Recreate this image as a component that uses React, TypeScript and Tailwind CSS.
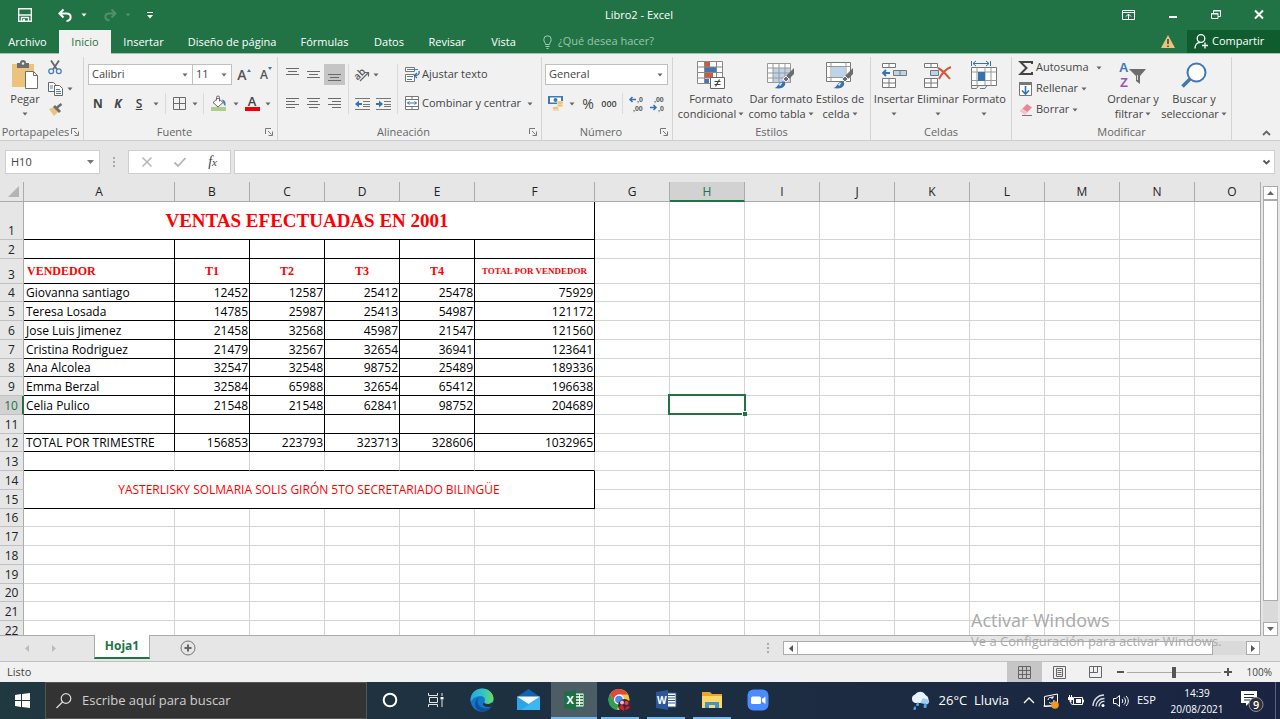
import type { ReactNode } from "react";
import clsx from "clsx";

const COLUMNS = ["A", "B", "C", "D", "E", "F", "G", "H", "I", "J", "K", "L", "M", "N", "O"];

const SALES: Record<number, string[]> = {
    4: ["Giovanna santiago", "12452", "12587", "25412", "25478", "75929"],
    5: ["Teresa Losada", "14785", "25987", "25413", "54987", "121172"],
    6: ["Jose Luis Jimenez", "21458", "32568", "45987", "21547", "121560"],
    7: ["Cristina Rodriguez", "21479", "32567", "32654", "36941", "123641"],
    8: ["Ana Alcolea", "32547", "32548", "98752", "25489", "189336"],
    9: ["Emma Berzal", "32584", "65988", "32654", "65412", "196638"],
    10: ["Celia Pulico", "21548", "21548", "62841", "98752", "204689"],
    11: ["", "", "", "", "", ""],
    12: ["TOTAL POR TRIMESTRE", "156853", "223793", "323713", "328606", "1032965"],
};

const TABS = [
    { name: "Archivo", width: "w-[59px] pr-1" },
    { name: "Inicio", width: "w-[52px]", active: true },
    { name: "Insertar", width: "w-[65px]" },
    { name: "Diseño de página", width: "w-[112px]" },
    { name: "Fórmulas", width: "w-[73px]" },
    { name: "Datos", width: "w-[56px]" },
    { name: "Revisar", width: "w-[60px]" },
    { name: "Vista", width: "w-[53px]" },
];

function Svg({ w, h, children }: { w: number; h: number; children: ReactNode }) {
    return (
        <svg width={w} height={h} viewBox={`0 0 ${w} ${h}`} fill="none" className="shrink-0 overflow-visible" aria-hidden="true">
            {children}
        </svg>
    );
}

function Caret({ color = "#666" }: { color?: string }) {
    return (
        <Svg w={6} h={4}>
            <path d="M0.500 0.500h5L3 3.500z" fill={color} />
        </Svg>
    );
}

function ToolButton({ label, className, children }: { label: string; className: string; children: ReactNode }) {
    return (
        <button aria-label={label} className={clsx("flex h-[21px] shrink-0 items-center justify-center", className)}>
            {children}
        </button>
    );
}

function Separator() {
    return <div className="mx-[3px] w-px self-stretch bg-[#dadada]" />;
}

function Combo({ label, value, className }: { label: string; value: string; className: string }) {
    return (
        <div className={clsx("flex h-[21px] items-center border border-[#c0c0c0] bg-white pr-1", className)}>
            <select aria-label={label} className="min-w-0 flex-1 appearance-none bg-transparent pl-[3px] outline-none">
                <option>{value}</option>
            </select>
            <Caret />
        </div>
    );
}

function Group({ title, className, launcher, children }: { title: string; className: string; launcher?: boolean; children: ReactNode }) {
    return (
        <section className={clsx("flex shrink-0 flex-col border-r border-[#d4d4d4]", className)}>
            <div className="flex flex-1 items-start">{children}</div>
            <div className="flex h-4 items-center text-[#666]">
                <span className="flex-1 text-center">{title}</span>
                {launcher && (
                    <button aria-label={`Opciones de ${title}`} className="mr-1">
                        <Svg w={8} h={8}>
                            <path d="M0.500 6V0.500H6M3 3l3.500 3.500M7.500 3.500v4h-4" stroke="#777" />
                        </Svg>
                    </button>
                )}
            </div>
        </section>
    );
}

function BigButton({ icon, line1, line2, className }: { icon: ReactNode; line1: string; line2?: string; className: string }) {
    return (
        <button className={clsx("flex shrink-0 flex-col items-center pt-[3px] leading-[15px] whitespace-nowrap", className)}>
            <span className="mb-px flex h-[30px] items-center">{icon}</span>
            <span>{line1}</span>
            <span className="flex h-[15px] items-center gap-[2px]">
                {line2}
                <Caret />
            </span>
        </button>
    );
}

function Lines({ rows, top = 0 }: { rows: [number, number][]; top?: number }) {
    return (
        <Svg w={14} h={13}>
            {rows.map(([x1, x2], i) => (
                <path key={i} d={`M${x1} ${top + i * 3 + 0.5}H${x2}`} stroke="#6a6a6a" />
            ))}
        </Svg>
    );
}

/* ---------- ribbon drawings ---------- */

const PasteIcon = (
    <Svg w={28} h={30}>
        <path d="M1 4h22v23H1z" fill="#ecc37c" />
        <path d="M6 3h3a3 3 0 0 1 6 0h3v5H6z" fill="#6d6d6d" />
        <circle cx="12" cy="3.500" r="1.200" fill="#f1f1f1" />
        <path d="M14.500 11.500h8l4 4v13h-12z" fill="#fff" stroke="#6d6d6d" />
        <path d="M22.500 11.500v4h4" stroke="#6d6d6d" />
    </Svg>
);

const CutIcon = (
    <Svg w={14} h={15}>
        <path d="M3 0.500l6 9M11 0.500l-6 9" stroke="#666" strokeWidth="1.800" />
        <circle cx="3.200" cy="11.300" r="2.400" stroke="#4a7ebb" strokeWidth="1.300" />
        <circle cx="10.800" cy="11.300" r="2.400" stroke="#4a7ebb" strokeWidth="1.300" />
    </Svg>
);

const CopyIcon = (
    <Svg w={15} h={14}>
        <path d="M0.500 0.500h5l2 2v7h-7z" fill="#fff" stroke="#666" />
        <path d="M2 4h3M2 6h3" stroke="#4a7ebb" />
        <path d="M6.500 3.500h5l3 3v7h-8z" fill="#fff" stroke="#666" />
        <path d="M8 7.500h4M8 9.500h5M8 11.500h5" stroke="#4a7ebb" />
    </Svg>
);

const PainterIcon = (
    <Svg w={15} h={13}>
        <path d="M1 6l5-2 4 5-4 4z" fill="#ecc37c" />
        <path d="M5 4l2-2 6 6-2 2z" fill="#6d6d6d" />
        <path d="M9 4.500L13.500 1" stroke="#6d6d6d" strokeWidth="2.500" />
    </Svg>
);

const BordersIcon = (
    <Svg w={13} h={13}>
        <path d="M0.500 0.500h12v12h-12zM6.500 0.500v12M0.500 6.500h12" stroke="#6a6a6a" />
    </Svg>
);

const FillIcon = (
    <Svg w={16} h={15}>
        <path d="M0 11h15v4H0z" fill="#a9d08e" />
        <path d="M2 6.500l5-4.500 5 4.500-5 4.500z" fill="#fff" stroke="#6a6a6a" />
        <path d="M5.500 4.500V1.500a1.500 1.500 0 0 1 3 0v4" stroke="#6a6a6a" />
        <path d="M11 3.500c3 0.500 4 2.500 3.500 6.500-1.500-0.500-2-2.500-2.500-4z" fill="#4a7ebb" />
    </Svg>
);

const OrientationIcon = (
    <Svg w={16} h={15}>
        <text x="0" y="11" transform="rotate(-45 5 8)" fontSize="10" fontFamily="Open Sans" fontWeight="600" fill="#555">ab</text>
        <path d="M6 14L14 6M14.500 9.500V5.500h-4" stroke="#666" strokeWidth="1.200" />
    </Svg>
);

function IndentIcon({ outdent }: { outdent?: boolean }) {
    return (
        <Svg w={15} h={12}>
            <path d="M0 0.500h15M8 3.500h7M8 6.500h7M8 8.500h7M0 11.500h15" stroke="#777" />
            {outdent ? (
                <path d="M0 6l4-3.500v2.500h3v2H4v2.500z" fill="#3572b0" />
            ) : (
                <path d="M7 6L3 2.500V5H0v2h3v2.500z" fill="#3572b0" />
            )}
        </Svg>
    );
}

const WrapIcon = (
    <Svg w={15} h={15}>
        <path d="M0.500 0.500h9v4h-9z" fill="#fff" stroke="#777" />
        <path d="M2 2.500h11" stroke="#4a7ebb" />
        <path d="M0.500 7.500h9v7h-9z" fill="#fff" stroke="#777" />
        <path d="M2 9.500h6M2 12.500h5" stroke="#4a7ebb" />
        <path d="M14 4c1 3-1 4.500-4 4.500M12 6l-2.500 2.500L12 11" stroke="#3572b0" strokeWidth="1.300" />
    </Svg>
);

const MergeIcon = (
    <Svg w={15} h={15}>
        <path d="M0.500 0.500h13v13h-13zM0.500 3.500h13M0.500 10.500h13M7 0.500v3M7 10.500v3" fill="#fff" stroke="#777" />
        <path d="M2.500 7h9M4.500 5.500L2.500 7l2 1.500M9.500 5.500l2 1.500-2 1.500" stroke="#3572b0" />
    </Svg>
);

const CurrencyIcon = (
    <Svg w={16} h={15}>
        <path d="M0 0h15v8H0z" fill="#3f78b5" />
        <path d="M2 1.500h11v5H2z" fill="#fff" />
        <circle cx="7.500" cy="4" r="2" fill="#3f78b5" />
        <path d="M9 5h6v7H9z" fill="#f1f1f1" />
        <ellipse cx="12" cy="6.500" rx="3" ry="1.500" fill="#ecc37c" />
        <ellipse cx="12" cy="9.500" rx="3" ry="1.300" fill="#ecc37c" />
        <ellipse cx="7.500" cy="12" rx="3" ry="1.300" fill="#ecc37c" />
        <path d="M5 13.500h6v1H5z" fill="#ecc37c" />
    </Svg>
);

function DecimalIcon({ more }: { more?: boolean }) {
    return (
        <Svg w={15} h={15}>
            <text x={more ? 8 : 4} y="6" fontSize="7" fontFamily="Liberation Sans" fontWeight="700" fill="#555">{more ? ",0" : ",00"}</text>
            <text x={more ? 4 : 8} y="15" fontSize="7" fontFamily="Liberation Sans" fontWeight="700" fill="#555">{more ? ",00" : ",0"}</text>
            {more ? (
                <path d="M7 3.500H1M3.500 1L1 3.500 3.500 6" stroke="#3572b0" strokeWidth="1.500" />
            ) : (
                <path d="M0 11.500h6M3.500 9L6 11.500 3.500 14" stroke="#3572b0" strokeWidth="1.500" />
            )}
        </Svg>
    );
}

const ConditionalIcon = (
    <Svg w={28} h={28}>
        <path d="M0.500 0.500h25v22h-25z" fill="#fff" />
        <path d="M8 0h5v6H8zM8 12h8v5H8z" fill="#d5573b" />
        <path d="M8 6h11v5H8zM8 18h4v4H8z" fill="#3f78b5" />
        <path d="M0.500 0.500h25v22h-25zM7.500 0.500v22M19.500 0.500v22M0.500 6h25M0.500 11.500h25M0.500 17h25" stroke="#888" />
        <path d="M13.500 16.500h14v11h-14z" fill="#fff" stroke="#666" />
        <path d="M17.500 20.500h6M17.500 23.500h6M22.500 18.500l-4 7" stroke="#444" strokeWidth="1.200" />
    </Svg>
);

const Brush = (
    <>
        <path d="M27 6v6l-7 7-3-3z" fill="#6d6d6d" />
        <path d="M19 14l3 3-3 3-3-3z" fill="#6d6d6d" stroke="#f1f1f1" />
        <path d="M7 26c4-0.500 4-5 8-6.500 2.500-0.500 4 1.500 3 3.500-1.500 3.500-6 4-11 3z" fill="#3572b0" />
        <path d="M12 22.500c1-1.500 2.500-2 3.500-1.500-1 0.500-1 2-2.500 3z" fill="#dbe8f4" />
    </>
);

const TableFormatIcon = (
    <Svg w={28} h={27}>
        <path d="M0.500 1.500h23v19h-23z" fill="#fff" />
        <path d="M6 6h18v15H6z" fill="#bdd3e9" />
        <path d="M0.500 1.500h23v19h-23zM6 1.500v19M12 1.500v19M18 1.500v19M0.500 6h23M0.500 11h23M0.500 16h23" stroke="#999" />
        {Brush}
    </Svg>
);

const CellStyleIcon = (
    <Svg w={28} h={27}>
        <path d="M0.500 0.500h24v19h-24z" fill="#fff" stroke="#777" />
        <path d="M5 0.500v19M20 0.500v19M0.500 4.500h24M0.500 15.500h24" stroke="#999" />
        <path d="M6 5h13v10H6z" fill="#bdd3e9" />
        {Brush}
    </Svg>
);

const InsertIcon = (
    <Svg w={26} h={27}>
        <path d="M1.500 1.500h13v4h-13zM8 1.500v4M1.500 16.500h13v9h-13zM8 16.500v9M1.500 21h13" fill="#fff" stroke="#777" />
        <path d="M12.500 8.500h13v5h-13z" fill="#bdd3e9" stroke="#777" />
        <path d="M19 8.500v5" stroke="#777" />
        <path d="M9 11H2M5 8l-3 3 3 3" stroke="#3572b0" strokeWidth="1.800" />
    </Svg>
);

const DeleteIcon = (
    <Svg w={28} h={27}>
        <path d="M0.500 1.500h13v4h-13zM7 1.500v4M0.500 16.500h13v9h-13zM7 16.500v9M0.500 21h13" fill="#fff" stroke="#777" />
        <path d="M6.500 8.500h8v5h-8z" fill="#bdd3e9" stroke="#777" />
        <path d="M14 6c4 2 8 6 12 11M27 5c-5 2-9 6-12 12" stroke="#d5573b" strokeWidth="2" />
    </Svg>
);

const FormatIcon = (
    <Svg w={28} h={29}>
        <path d="M1.500 0v5M20.500 0v5M3 2.500h16M6 0L3 2.500 6 5M16 0l3 2.500L16 5" stroke="#3572b0" />
        <path d="M1.500 6.500h25v18h-25z" fill="#fff" stroke="#777" />
        <path d="M7 6.500v18M15 6.500v18M21 6.500v18M1.500 11h25M1.500 19.500h25" stroke="#999" />
        <path d="M8 11h7v9H8z" fill="#3572b0" />
        <path d="M1.500 24.500v3h5l2-3M10 27.500h5l2-3" stroke="#777" />
    </Svg>
);

const SortIcon = (
    <Svg w={28} h={27}>
        <text x="0" y="10" fontSize="13" fontFamily="Liberation Sans" fontWeight="700" fill="#3f78b5">A</text>
        <text x="1" y="25" fontSize="13" fontFamily="Liberation Sans" fontWeight="700" fill="#9a52b8">Z</text>
        <path d="M10 7h17l-6 7v8l-4-3v-5z" fill="#6d6d6d" />
        <path d="M18.500 13v5" stroke="#ddd" />
    </Svg>
);

const FindIcon = (
    <Svg w={26} h={27}>
        <circle cx="15.500" cy="10.500" r="9" fill="#fff" stroke="#3f78b5" strokeWidth="2" />
        <path d="M9 17l-7.500 7.500" stroke="#3f78b5" strokeWidth="3.500" />
    </Svg>
);

/* ---------- window ---------- */

function TitleBar() {
    return (
        <header className="flex h-[30px] shrink-0 items-center bg-[#217346] text-white">
            <div className="flex flex-1 items-center pl-[18px]">
                <button aria-label="Guardar" className="mr-[26px]">
                    <Svg w={14} h={14}>
                        <path d="M0.700 0.700h12.600v12.600H0.700z" stroke="#f3f8f5" strokeWidth="1.400" />
                        <path d="M1 7h12M3.500 13V9.500h7V13" stroke="#f3f8f5" strokeWidth="1.400" />
                        <path d="M5 11h2v3H5z" fill="#f3f8f5" />
                    </Svg>
                </button>
                <button aria-label="Deshacer" className="mr-2">
                    <Svg w={15} h={13}>
                        <path d="M1.500 4.500h7c5.500 0 5.500 7 0 7.500M5.500 0.500l-4 4 4 4" stroke="#fff" strokeWidth="2" />
                    </Svg>
                </button>
                <Caret color="#fff" />
                <button aria-label="Rehacer" className="mr-2 ml-4">
                    <Svg w={14} h={13}>
                        <path d="M12.500 4.500h-6c-5.500 0-5.500 6 0 7M8.500 0.500l4 4-4 4" stroke="#4e916b" strokeWidth="2" />
                    </Svg>
                </button>
                <Caret color="#4e916b" />
                <button aria-label="Personalizar barra" className="ml-4">
                    <Svg w={6} h={7}>
                        <path d="M0 0.500h6" stroke="#fff" />
                        <path d="M0 3h6L3 6.500z" fill="#fff" />
                    </Svg>
                </button>
            </div>
            <h1 className="pr-1">Libro2 - Excel</h1>
            <div className="flex flex-1 items-center justify-end gap-[33px] pr-4">
                <button aria-label="Opciones de la cinta">
                    <Svg w={13} h={10}>
                        <path d="M0.500 0.500h12v9h-12zM0.500 2.500h12M6.500 9V4.500M4 6.500l2.500-2.500L9 6.500" stroke="#fff" />
                    </Svg>
                </button>
                <button aria-label="Minimizar">
                    <Svg w={10} h={10}>
                        <path d="M1 7h8" stroke="#fff" strokeWidth="2" />
                    </Svg>
                </button>
                <button aria-label="Restaurar">
                    <Svg w={10} h={10}>
                        <path d="M2.500 3V0.500h7v6H7M0.500 3.500h6.500v5H0.500zM0.500 4h6.500M2.500 1h7" stroke="#fff" />
                    </Svg>
                </button>
                <button aria-label="Cerrar">
                    <Svg w={10} h={10}>
                        <path d="M1 0.500l8 8M9 0.500l-8 8" stroke="#fff" strokeWidth="2" />
                    </Svg>
                </button>
            </div>
        </header>
    );
}

function TabBar() {
    return (
        <nav className="flex h-[24px] shrink-0 items-stretch border-b border-[#9fc3ad] bg-[#217346] text-white">
            {TABS.map((tab) => (
                <button
                    key={tab.name}
                    className={clsx("shrink-0 pt-px whitespace-nowrap", tab.width, tab.active && "-mb-px bg-[#f1f1f1] text-[#217346]")}
                >
                    {tab.name}
                </button>
            ))}
            <label className="flex min-w-0 flex-1 items-center gap-[6px] pl-[13px]">
                <Svg w={9} h={14}>
                    <path d="M2.500 9.500C2.500 7.500 0.800 7 0.800 4.500a3.700 3.700 0 0 1 7.400 0C8.200 7 6.500 7.500 6.500 9.500zM2.500 11.500h4M3.500 13.500h2" stroke="#a6cdb5" />
                </Svg>
                <input
                    placeholder="¿Qué desea hacer?"
                    aria-label="¿Qué desea hacer?"
                    className="min-w-0 flex-1 bg-transparent outline-none placeholder:text-[#9cc4ab]"
                />
            </label>
            <div className="flex w-[26px] shrink-0 items-center">
                <Svg w={14} h={13}>
                    <path d="M7 0l7 13H0z" fill="#ecc37c" />
                    <path d="M7 4v5M7 10.500v1.500" stroke="#444" strokeWidth="1.600" />
                </Svg>
            </div>
            <button className="flex w-[93px] shrink-0 items-center gap-[4px] bg-[#0f5c2f] pl-[7px]">
                <Svg w={14} h={15}>
                    <circle cx="7" cy="4.500" r="3.800" stroke="#fff" strokeWidth="1.300" />
                    <path d="M1 14.500c0-3.500 2-6 5-6M11 8.500v6M8 11.500h6" stroke="#fff" strokeWidth="1.300" />
                </Svg>
                Compartir
            </button>
        </nav>
    );
}

function Ribbon() {
    return (
        <div className="flex h-[87px] shrink-0 overflow-hidden border-b border-[#cfcfcf] bg-[#f1f1f1] pt-[3px]">
            <Group title="Portapapeles" className="w-[84px]" launcher>
                <BigButton icon={PasteIcon} line1="Pegar" className="w-[44px] pl-[6px]" />
                <div className="flex flex-col pl-[3px]">
                    <ToolButton label="Cortar" className="w-[16px]">{CutIcon}</ToolButton>
                    <div className="flex">
                        <ToolButton label="Copiar" className="w-[16px]">{CopyIcon}</ToolButton>
                        <ToolButton label="Más opciones de copiar" className="w-[14px]"><Caret /></ToolButton>
                    </div>
                    <ToolButton label="Copiar formato" className="w-[16px]">{PainterIcon}</ToolButton>
                </div>
            </Group>

            <Group title="Fuente" className="w-[194px]" launcher>
                <div className="flex flex-col gap-2 pt-[7px] pl-1">
                    <div className="flex">
                        <Combo label="Fuente" value="Calibri" className="w-[105px]" />
                        <Combo label="Tamaño" value="11" className="-ml-px w-[40px]" />
                        <ToolButton label="Aumentar tamaño" className="w-[24px] text-[14px] font-semibold text-[#555]">
                            A<span className="mb-2"><Svg w={4} h={3}><path d="M0 3h4L2 0z" fill="#3f78b5" /></Svg></span>
                        </ToolButton>
                        <ToolButton label="Disminuir tamaño" className="w-[20px] text-[12px] font-semibold text-[#555]">
                            A<span className="mb-3"><Svg w={4} h={3}><path d="M0 0h4L2 3z" fill="#3f78b5" /></Svg></span>
                        </ToolButton>
                    </div>
                    <div className="flex">
                        <ToolButton label="Negrita" className="w-[20px] text-[12px] font-bold">N</ToolButton>
                        <ToolButton label="Cursiva" className="w-[20px] text-[12px] font-bold italic">K</ToolButton>
                        <ToolButton label="Subrayado" className="w-[22px] text-[12px] font-semibold underline">S</ToolButton>
                        <ToolButton label="Tipos de subrayado" className="w-[12px]"><Caret /></ToolButton>
                        <Separator />
                        <ToolButton label="Bordes" className="w-[21px]">{BordersIcon}</ToolButton>
                        <ToolButton label="Tipos de borde" className="w-[10px]"><Caret /></ToolButton>
                        <Separator />
                        <ToolButton label="Color de relleno" className="w-[24px]">{FillIcon}</ToolButton>
                        <ToolButton label="Colores de relleno" className="w-[10px]"><Caret /></ToolButton>
                        <ToolButton label="Color de fuente" className="w-[22px]">
                            <span className="flex h-[15px] w-[15px] items-center justify-center border-b-4 border-[#f00000] text-[13px] font-semibold">A</span>
                        </ToolButton>
                        <ToolButton label="Colores de fuente" className="w-[10px]"><Caret /></ToolButton>
                    </div>
                </div>
            </Group>

            <Group title="Alineación" className="w-[264px]" launcher>
                <div className="flex pt-[7px] pl-1">
                    <div className="flex flex-col gap-2">
                        <div className="flex">
                            <ToolButton label="Alinear arriba" className="w-[21px]"><Lines rows={[[0, 13], [2, 11], [0, 13]]} /></ToolButton>
                            <ToolButton label="Alinear al medio" className="w-[21px]"><Lines top={3} rows={[[0, 13], [2, 11], [0, 13]]} /></ToolButton>
                            <ToolButton label="Alinear abajo" className="w-[21px] bg-[#c5c5c5]"><Lines top={6} rows={[[0, 13], [2, 11], [0, 13]]} /></ToolButton>
                        </div>
                        <div className="flex">
                            <ToolButton label="Izquierda" className="w-[21px]"><Lines top={1} rows={[[0, 13], [0, 9], [0, 13], [0, 9]]} /></ToolButton>
                            <ToolButton label="Centrar" className="w-[21px]"><Lines top={1} rows={[[0, 13], [2, 11], [0, 13], [2, 11]]} /></ToolButton>
                            <ToolButton label="Derecha" className="w-[21px]"><Lines top={1} rows={[[0, 13], [4, 13], [0, 13], [4, 13]]} /></ToolButton>
                        </div>
                    </div>
                    <Separator />
                    <div className="flex w-[42px] flex-col gap-2">
                        <div className="flex">
                            <ToolButton label="Orientación" className="w-[19px]">{OrientationIcon}</ToolButton>
                            <ToolButton label="Tipos de orientación" className="w-[10px]"><Caret /></ToolButton>
                        </div>
                        <div className="flex">
                            <ToolButton label="Disminuir sangría" className="w-[21px]"><IndentIcon outdent /></ToolButton>
                            <ToolButton label="Aumentar sangría" className="w-[21px]"><IndentIcon /></ToolButton>
                        </div>
                    </div>
                    <Separator />
                    <div className="flex flex-col gap-2 pl-1">
                        <button className="flex h-[21px] items-center gap-[2px]">{WrapIcon}Ajustar texto</button>
                        <button className="flex h-[21px] items-center gap-[2px] whitespace-nowrap">
                            {MergeIcon}Combinar y centrar<span className="ml-1"><Caret /></span>
                        </button>
                    </div>
                </div>
            </Group>

            <Group title="Número" className="w-[131px]" launcher>
                <div className="flex flex-col gap-2 pt-[7px] pl-[3px]">
                    <Combo label="Formato de número" value="General" className="w-[123px]" />
                    <div className="flex">
                        <ToolButton label="Moneda" className="w-[22px]">{CurrencyIcon}</ToolButton>
                        <ToolButton label="Formatos de moneda" className="w-[10px]"><Caret /></ToolButton>
                        <ToolButton label="Porcentaje" className="w-[22px] text-[14px]">%</ToolButton>
                        <ToolButton label="Millares" className="w-[20px] text-[9px] font-semibold">000</ToolButton>
                        <Separator />
                        <ToolButton label="Aumentar decimales" className="w-[21px]"><DecimalIcon more /></ToolButton>
                        <ToolButton label="Disminuir decimales" className="w-[21px]"><DecimalIcon /></ToolButton>
                    </div>
                </div>
            </Group>

            <Group title="Estilos" className="w-[198px]">
                <BigButton icon={ConditionalIcon} line1="Formato" line2="condicional" className="w-[76px]" />
                <BigButton icon={TableFormatIcon} line1="Dar formato" line2="como tabla" className="w-[64px]" />
                <BigButton icon={CellStyleIcon} line1="Estilos de" line2="celda" className="w-[54px]" />
            </Group>

            <Group title="Celdas" className="w-[141px]">
                <BigButton icon={InsertIcon} line1="Insertar" className="w-[46px]" />
                <BigButton icon={DeleteIcon} line1="Eliminar" className="w-[42px]" />
                <BigButton icon={FormatIcon} line1="Formato" className="w-[50px]" />
            </Group>

            <Group title="Modificar" className="w-[220px]">
                <div className="flex w-[92px] flex-col pl-[7px]">
                    <button className="flex h-[21px] items-center gap-[3px]">
                        <Svg w={14} h={14}>
                            <path d="M13 3V1H1.500l6 6-6 6H13v-2" stroke="#444" strokeWidth="2" />
                        </Svg>
                        Autosuma<span className="ml-1"><Caret /></span>
                    </button>
                    <button className="flex h-[21px] items-center gap-[3px]">
                        <Svg w={14} h={14}>
                            <path d="M0.500 0.500h12v13h-12z" fill="#fff" stroke="#777" />
                            <path d="M0 0h13v3H0z" fill="#777" />
                            <path d="M6.500 4v8M3 8.500l3.500 3.500 3.500-3.500" stroke="#3572b0" strokeWidth="1.600" />
                        </Svg>
                        Rellenar<Caret />
                    </button>
                    <button className="flex h-[21px] items-center gap-[3px]">
                        <Svg w={14} h={13}>
                            <path d="M1 8l7-7 5 3.500-7 7z" fill="#e88796" />
                            <path d="M1 8l2.500-2.500 5 3.500L6 11.500z" fill="#f5c5cc" />
                            <path d="M3 12.500h10" stroke="#777" />
                        </Svg>
                        Borrar<Caret />
                    </button>
                </div>
                <BigButton icon={SortIcon} line1="Ordenar y" line2="filtrar" className="w-[58px]" />
                <BigButton icon={FindIcon} line1="Buscar y" line2="seleccionar" className="w-[64px]" />
            </Group>
            <div className="flex flex-1 items-end justify-end pr-[9px] pb-1">
                <button aria-label="Contraer la cinta">
                    <Svg w={9} h={6}>
                        <path d="M1 5l3.500-3.500L8 5" stroke="#666" strokeWidth="1.800" />
                    </Svg>
                </button>
            </div>
        </div>
    );
}

function FormulaBar() {
    return (
        <div className="flex h-[41px] shrink-0 items-start bg-[#e6e6e6] px-[5px] pt-[9px]">
            <div className="flex h-6 w-[95px] shrink-0 items-center border border-[#cfcfcf] bg-white pr-[5px]">
                <input aria-label="Cuadro de nombres" defaultValue="H10" className="min-w-0 flex-1 pl-[5px] outline-none" />
                <Svg w={7} h={4}><path d="M0 0h7L3.500 4z" fill="#777" /></Svg>
            </div>
            <div className="flex h-6 w-[28px] shrink-0 items-center justify-center">
                <Svg w={2} h={10}><path d="M0 0h2v2H0zM0 4h2v2H0zM0 8h2v2H0z" fill="#aaa" /></Svg>
            </div>
            <div className="flex h-6 w-[103px] shrink-0 items-center justify-around border border-[#cfcfcf] bg-white px-[2px]">
                <button aria-label="Cancelar">
                    <Svg w={10} h={10}><path d="M0.500 0.500l9 9M9.500 0.500l-9 9" stroke="#b5b5b5" strokeWidth="1.500" /></Svg>
                </button>
                <button aria-label="Introducir">
                    <Svg w={12} h={10}><path d="M0.500 5.500l3.500 3.500L11.500 1" stroke="#b5b5b5" strokeWidth="1.800" /></Svg>
                </button>
                <button aria-label="Insertar función" className="font-['Liberation_Serif',serif] text-[14px] leading-4 text-[#444] italic">
                    f<span className="text-[11px]">x</span>
                </button>
            </div>
            <div className="ml-[3px] flex h-6 min-w-0 flex-1 items-center border border-[#cfcfcf] bg-white pr-1">
                <input aria-label="Barra de fórmulas" className="min-w-0 flex-1 px-1 outline-none" />
                <Svg w={7} h={5}><path d="M0.500 0.500l3 3 3-3" stroke="#555" strokeWidth="1.800" /></Svg>
            </div>
        </div>
    );
}

const grid = "border-r border-b border-[#d4d4d4]";
const ink = "border-r border-b border-black";
const fancy = "font-['Liberation_Serif',serif] font-bold text-[#ff0000]";

// rows are 18.75px on screen, so every fourth one loses a pixel
function rowHeight(row: number) {
    if (row === 1) return "h-[38px]";
    if (row === 3) return "h-[25px]";
    return row % 4 === 0 ? "h-[18px]" : "h-[19px]";
}

function dataCells(row: number) {
    if (row === 1) {
        return (
            <td colSpan={6} className={clsx(ink, fancy, "pr-1 text-center text-[19px] leading-6")}>
                VENTAS EFECTUADAS EN 2001
            </td>
        );
    }
    if (row === 3) {
        return ["VENDEDOR", "T1", "T2", "T3", "T4", "TOTAL POR VENDEDOR"].map((text, i) => (
            <td
                key={text}
                className={clsx(ink, fancy, "leading-4 whitespace-nowrap", i === 0 ? "pl-[3px] text-left" : "text-center", i === 5 ? "text-[9px]" : "text-[12px]")}
            >
                {text}
            </td>
        ));
    }
    if (row === 14) {
        return (
            <td colSpan={6} rowSpan={2} className={clsx(ink, "text-center text-[#ff0000]")}>
                YASTERLISKY SOLMARIA SOLIS GIRÓN 5TO SECRETARIADO BILINGÜE
            </td>
        );
    }
    if (row === 15) return null;
    const values = row === 2 ? SALES[11] : SALES[row];
    return Array.from({ length: 6 }, (_, i) => (
        <td
            key={i}
            className={clsx(
                values ? ink : row === 13 ? "border-r border-b border-r-[#d4d4d4] border-b-black" : grid,
                "pt-px whitespace-nowrap",
                i === 0 ? "pl-[2px] text-left" : "pr-[1px] text-right",
            )}
        >
            {values?.[i]}
        </td>
    ));
}

function Sheet() {
    return (
        <main className="flex min-h-0 flex-1 bg-[#e6e6e6]">
            <div className="min-w-0 flex-1 overflow-hidden border-r border-b border-[#ababab]">
                <table className="w-[1270px] table-fixed border-separate border-spacing-0 bg-white text-[12px] leading-4 text-black">
                    <colgroup>
                        <col className="w-[24px]" />
                        <col className="w-[151px]" />
                        <col span={4} className="w-[75px]" />
                        <col className="w-[120px]" />
                        <col span={9} className="w-[75px]" />
                    </colgroup>
                    <thead>
                        <tr className="h-[20px] bg-[#e6e6e6]">
                            <th className="border-r border-b border-[#ababab]">
                                <div className="flex justify-end pr-1">
                                    <Svg w={11} h={11}><path d="M11 0v11H0z" fill="#b4b4b4" /></Svg>
                                </div>
                            </th>
                            {COLUMNS.map((col) => (
                                <th
                                    key={col}
                                    className={clsx(
                                        "border-r border-r-[#ababab] pt-px font-normal",
                                        col === "H" ? "border-b-2 border-b-[#217346] bg-[#d2d2d2] text-[#217346]" : "border-b border-b-[#ababab] text-[#222]",
                                    )}
                                >
                                    {col}
                                </th>
                            ))}
                        </tr>
                    </thead>
                    <tbody>
                        {Array.from({ length: 22 }, (_, i) => i + 1).map((row) => (
                            <tr key={row} className={rowHeight(row)}>
                                <th
                                    className={clsx(
                                        "border-b border-b-[#c0c0c0] text-center align-bottom font-normal",
                                        row === 10 ? "border-r-2 border-r-[#217346] bg-[#d2d2d2] text-[#217346]" : "border-r border-r-[#ababab] bg-[#e6e6e6] text-[#222]",
                                    )}
                                >
                                    {row}
                                </th>
                                {dataCells(row)}
                                {COLUMNS.slice(6).map((col) => (
                                    <td key={col} className={grid}>
                                        {col === "H" && row === 10 && (
                                            <div className="relative">
                                                <div className="absolute -top-[11px] -left-[2px] h-[21px] w-[78px] border-2 border-[#217346]">
                                                    <div className="absolute -right-[3px] -bottom-[3px] size-[5px] border-t border-l border-white bg-[#217346]" />
                                                </div>
                                            </div>
                                        )}
                                    </td>
                                ))}
                            </tr>
                        ))}
                    </tbody>
                </table>
            </div>
            <div className="flex w-[19px] shrink-0 flex-col px-[2px] pt-1">
                <button aria-label="Subir" className="flex h-[14px] items-center justify-center border border-[#ababab] bg-white">
                    <Svg w={7} h={4}><path d="M0 4h7L3.500 0z" fill="#666" /></Svg>
                </button>
                <div className="flex-1 bg-[#dadada] pb-[21px]">
                    <div className="h-full border border-[#ababab] bg-white" />
                </div>
                <button aria-label="Bajar" className="flex h-[14px] items-center justify-center border border-[#ababab] bg-white">
                    <Svg w={7} h={4}><path d="M0 0h7L3.500 4z" fill="#666" /></Svg>
                </button>
            </div>
        </main>
    );
}

function SheetTabs() {
    return (
        <div className="flex h-[25px] shrink-0 items-start bg-[#e6e6e6]">
            <div className="flex h-6 w-[94px] items-center gap-[23px] pl-[25px]">
                <button aria-label="Hoja anterior"><Svg w={4} h={7}><path d="M4 0v7L0 3.500z" fill="#bbb" /></Svg></button>
                <button aria-label="Hoja siguiente"><Svg w={4} h={7}><path d="M0 0v7l4-3.500z" fill="#bbb" /></Svg></button>
            </div>
            <button className="-mt-px h-6 w-[56px] border-x border-b-2 border-x-[#ababab] border-b-[#217346] bg-white text-[12px] font-bold text-[#217346]">
                Hoja1
            </button>
            <button aria-label="Hoja nueva" className="ml-[30px] flex h-6 items-center">
                <Svg w={16} h={16}>
                    <circle cx="8" cy="8" r="7" stroke="#777" />
                    <path d="M8 4.500v7M4.500 8h7" stroke="#666" strokeWidth="2" />
                </Svg>
            </button>
            <div className="flex-1" />
            <div className="flex h-6 items-center">
                <Svg w={2} h={10}><path d="M0 0h2v2H0zM0 4h2v2H0zM0 8h2v2H0z" fill="#aaa" /></Svg>
            </div>
            <div className="mt-[5px] mr-5 ml-[14px] flex h-[14px] w-[477px] shrink-0 items-stretch bg-[#dadada]">
                <button aria-label="Izquierda" className="flex w-[15px] items-center justify-center border border-[#ababab] bg-white">
                    <Svg w={4} h={7}><path d="M4 0v7L0 3.500z" fill="#555" /></Svg>
                </button>
                <div className="mr-[33px] flex-1 border border-l-0 border-[#ababab] bg-white" />
                <button aria-label="Derecha" className="flex w-[14px] items-center justify-center border border-[#ababab] bg-white">
                    <Svg w={4} h={7}><path d="M0 0v7l4-3.500z" fill="#555" /></Svg>
                </button>
            </div>
        </div>
    );
}

function StatusBar() {
    return (
        <footer className="flex h-[21px] shrink-0 items-center border-t border-[#c0c0c0] bg-[#f1f1f1] pr-2 pl-[7px]">
            <span className="flex-1">Listo</span>
            <button aria-label="Normal" className="flex h-full w-[35px] items-center justify-center bg-[#c6c6c6]">
                <Svg w={13} h={13}><path d="M0.500 0.500h12v12h-12zM4.500 0.500v12M8.500 0.500v12M0.500 4.500h12M0.500 8.500h12" stroke="#666" /></Svg>
            </button>
            <button aria-label="Diseño de página" className="flex w-[36px] items-center justify-center">
                <Svg w={13} h={13}><path d="M0.500 0.500h12v12h-12zM3.500 2.500h6v8h-6zM4.500 4.500h4M4.500 6.500h4M4.500 8.500h4" stroke="#666" /></Svg>
            </button>
            <button aria-label="Salto de página" className="flex w-[36px] items-center justify-center">
                <Svg w={13} h={12}><path d="M0.500 0.500h12v11h-12zM4.500 0.500v6M8.500 0.500v6M0.500 6.500h8" stroke="#666" /></Svg>
            </button>
            <button aria-label="Alejar" className="ml-[3px]"><Svg w={7} h={8}><path d="M0 4h7" stroke="#555" strokeWidth="2" /></Svg></button>
            <input
                type="range"
                aria-label="Zoom"
                defaultValue={50}
                className="mx-[3px] h-[11px] w-[94px] appearance-none bg-transparent [&::-webkit-slider-runnable-track]:h-px [&::-webkit-slider-runnable-track]:bg-[#aaa] [&::-webkit-slider-thumb]:-mt-[5px] [&::-webkit-slider-thumb]:h-[11px] [&::-webkit-slider-thumb]:w-[4px] [&::-webkit-slider-thumb]:appearance-none [&::-webkit-slider-thumb]:bg-[#555]"
            />
            <button aria-label="Acercar" className="mr-[15px]"><Svg w={8} h={8}><path d="M0 4h8M4 0v8" stroke="#555" strokeWidth="2" /></Svg></button>
            <span className="text-[10px]">100%</span>
        </footer>
    );
}

function TaskItem({ label, active, open, children }: { label: string; active?: boolean; open?: boolean; children: ReactNode }) {
    return (
        <button aria-label={label} className={clsx("flex w-[46px] shrink-0 flex-col items-center", active && "bg-[#4c5d66]")}>
            <span className="flex flex-1 items-center">{children}</span>
            <span className={clsx("h-[2px]", active ? "w-full" : "w-[38px]", open && "bg-[#76b9ed]")} />
        </button>
    );
}

function Taskbar() {
    return (
        <div className="flex h-[37px] shrink-0 items-stretch bg-linear-to-r from-[#20383f] to-[#1a2442] text-white">
            <button aria-label="Inicio de Windows" className="flex w-[45px] shrink-0 items-center justify-center">
                <Svg w={15} h={15}>
                    <path d="M0 2l6-1v6H0zM7 1l8-1v7H7zM0 8h6v6l-6-1zM7 8h8v7l-8-1z" fill="#fff" />
                </Svg>
            </button>
            <label className="flex w-[322px] shrink-0 items-center gap-[10px] border border-[#555] bg-[#333] pl-[10px]">
                <Svg w={16} h={16}>
                    <circle cx="10" cy="5.500" r="4.800" stroke="#ddd" strokeWidth="1.200" />
                    <path d="M6.500 9L0.500 15" stroke="#ddd" strokeWidth="1.200" />
                </Svg>
                <input placeholder="Escribe aquí para buscar" aria-label="Buscar" className="min-w-0 flex-1 bg-transparent text-[13px] outline-none placeholder:text-[#cfcfcf]" />
            </label>
            <TaskItem label="Cortana">
                <Svg w={16} h={16}><circle cx="8" cy="8" r="6.300" stroke="#fff" strokeWidth="2" /></Svg>
            </TaskItem>
            <TaskItem label="Vista de tareas">
                <Svg w={17} h={16}>
                    <path d="M0.500 1v2.500h9V1M1.500 5.500h8v5h-8zM0.500 15v-2.500h9V15M14 1v3M14 8v7" stroke="#e5e5e5" />
                    <path d="M12.500 5h3v2.500h-3z" fill="#fff" />
                </Svg>
            </TaskItem>
            <TaskItem label="Edge">
                <Svg w={24} h={24}>
                    <defs>
                        <linearGradient id="edgeTop" x1="0" y1="0.500" x2="1" y2="0.500">
                            <stop stopColor="#28a7de" />
                            <stop offset="0.600" stopColor="#37c6c0" />
                            <stop offset="1" stopColor="#6fdc54" />
                        </linearGradient>
                    </defs>
                    <circle cx="12" cy="12" r="11.500" fill="#1277c9" />
                    <path d="M0.700 10C2 4 6.500 0.500 12 0.500c7 0 11.500 5 11.500 10 0 4-3 5.500-6 5.500-2.500 0-3.700-1-3.200-2 2-3-0.500-6-4-6C6 8 2.500 10 0.700 14z" fill="url(#edgeTop)" />
                    <path d="M9 9.500c-2.500 3-2 8.500 4 10.500 3.500 1 7 0 9.300-2.500C19 23 13 25 8 22 3.500 19 4.500 11.500 9 9.500z" fill="#124f9e" />
                    <path d="M14.300 14c-0.500 1 0.700 2 3.200 2 1.800 0 3.700-0.600 4.900-2L24 17l-2 1.200c-3 1.500-8.500 1.300-9.200-2.200z" fill="#20363f" />
                </Svg>
            </TaskItem>
            <TaskItem label="Correo">
                <Svg w={23} h={22}>
                    <path d="M0 8l11.500-8L23 8v2H0z" fill="#0f64b4" />
                    <path d="M0 8h23v13H0z" fill="#2aa5e8" />
                    <path d="M23 8v13H4z" fill="#47bdf3" opacity="0.700" />
                    <path d="M0 7.500h23L11.500 15z" fill="#f5f9fc" />
                </Svg>
            </TaskItem>
            <TaskItem label="Excel" active open>
                <Svg w={21} h={20}>
                    <path d="M9 3h11v14H9z" fill="#fff" stroke="#217346" />
                    <path d="M12 5.500h3M16 5.500h3M12 8.500h3M16 8.500h3M12 11.500h3M16 11.500h3M12 14.500h3M16 14.500h3" stroke="#217346" strokeWidth="1.500" />
                    <path d="M0 2l12-2v20L0 18z" fill="#1d7044" />
                    <text x="2.500" y="14" fontSize="11" fontFamily="Open Sans" fontWeight="700" fill="#fff">X</text>
                </Svg>
            </TaskItem>
            <TaskItem label="Chrome" open>
                <Svg w={24} h={24}>
                    <circle cx="11" cy="11.500" r="10.500" fill="#f3c743" />
                    <path d="M2 6a10.500 10.500 0 0 1 18.200 0.500H11L6.500 14z" fill="#dd4b3e" />
                    <path d="M2 6l5 9 4 2-2.500 5A10.500 10.500 0 0 1 2 6z" fill="#2f9e57" />
                    <circle cx="11" cy="11.500" r="5" fill="#fff" />
                    <circle cx="11" cy="11.500" r="3.800" fill="#4a8af4" />
                    <circle cx="16.500" cy="17.500" r="6.500" fill="#4a2230" />
                    <circle cx="14" cy="14.500" r="2" fill="#e7c2bd" />
                    <circle cx="18.500" cy="15" r="2" fill="#d9475e" />
                    <path d="M11 20c1-4 4-4 5 0v3M17 22c0-4 3.500-5 5-2" fill="#c5243f" />
                </Svg>
            </TaskItem>
            <TaskItem label="Word" open>
                <Svg w={21} h={20}>
                    <path d="M9 3h11v14H9z" fill="#fff" stroke="#2b579a" />
                    <path d="M12 5.500h7M12 8h7M12 10.500h7M12 13h7" stroke="#2b579a" />
                    <path d="M0 2l12-2v20L0 18z" fill="#2a569a" />
                    <text x="1" y="14" fontSize="10" fontFamily="Open Sans" fontWeight="700" fill="#fff">W</text>
                </Svg>
            </TaskItem>
            <TaskItem label="Explorador" open>
                <Svg w={20} h={18}>
                    <path d="M0 1h8l2 2h10v14H0z" fill="#e8a92a" />
                    <path d="M0 5h20v12H0z" fill="#fbd867" />
                    <path d="M3 17v-6h14v6h-4v-3H7v3z" fill="#3d95c9" />
                </Svg>
            </TaskItem>
            <TaskItem label="Zoom">
                <Svg w={22} h={22}>
                    <rect x="0.500" y="0.500" width="21" height="21" rx="6" fill="#4a8cff" />
                    <rect x="4" y="7.500" width="10" height="7.500" rx="1.500" fill="#fff" />
                    <path d="M15 10l3.500-2.500v7.500L15 12.500z" fill="#fff" />
                </Svg>
            </TaskItem>
            <div className="flex flex-1 items-center justify-end pr-1">
                <button className="flex items-center gap-2 text-[13px] whitespace-nowrap">
                    <Svg w={21} h={20}>
                        <path d="M5 12a4.500 4.500 0 0 1 0-8.500A6 6 0 0 1 15.500 4a4.500 4.500 0 0 1 1 8z" fill="#e8f2fa" />
                        <path d="M10 12l3-5 6 2a4 4 0 0 1-2 4.500z" fill="#9fcdf1" />
                        <path d="M8 11c2 3 1 4-0.500 4S5 14 8 11zM15 12c3 3 2 5 0 5s-2-2 0-5zM5 15c2 2 1 4-0.500 4S3 17 5 15z" fill="#4ba3ea" />
                    </Svg>
                    <span>26°C&nbsp; Lluvia</span>
                </button>
                <button aria-label="Iconos ocultos" className="ml-[14px]">
                    <Svg w={12} h={7}><path d="M1 6l5-5 5 5" stroke="#fff" strokeWidth="1.300" /></Svg>
                </button>
                <div className="ml-2 flex items-center gap-2">
                    <Svg w={17} h={16}>
                        <path d="M1.500 3.500L14.500 1v11l-13 1.500zM0.500 13h13" stroke="#fff" />
                        <path d="M5 7a3 3 0 0 1 5-2V3M10 5H8M11 7a3 3 0 0 1-5 2.500" stroke="#fff" />
                        <circle cx="12" cy="12" r="3.800" fill="#f39a1e" />
                    </Svg>
                    <Svg w={16} h={11}>
                        <path d="M5.500 2.500h9v7h-9z" stroke="#fff" />
                        <path d="M8 4h5v4H8zM15 4.500h1v3h-1zM0 2h5v3H3.500v2h-2V5H0zM1 0h1v2H1zM3 0h1v2H3z" fill="#fff" />
                        <path d="M2.500 6c0 3 1 3.500 3 3.500" stroke="#fff" />
                    </Svg>
                    <Svg w={13} h={13}>
                        <path d="M1 12A11 11 0 0 1 12 1M4 12.500A8 8 0 0 1 12.500 4.500M7 12.500A5 5 0 0 1 12.500 7.500" stroke="#d8dce4" strokeWidth="1.300" />
                        <circle cx="11" cy="11.500" r="1.500" fill="#fff" />
                    </Svg>
                    <Svg w={16} h={14}>
                        <path d="M0.500 4.500h2.500l3.500-3v11L3 9.500H0.500zM9 5c1 1 1 3 0 4M11 3.500c2 2 2 5 0 7M13 2c3 3 3 7 0 10" stroke="#fff" />
                    </Svg>
                </div>
                <span className="ml-2 w-[20px] text-[11px]">ESP</span>
                <div className="ml-3 w-[56px] text-center text-[10px] leading-4 whitespace-nowrap">
                    14:39<br />20/08/2021
                </div>
                <button aria-label="Notificaciones" className="mr-[10px] ml-4">
                    <Svg w={24} h={24}>
                        <path d="M0 2h16v12H8l-3 3v-3H0z" fill="#fff" />
                        <path d="M3 5.500h10M3 8.500h10M3 11h6" stroke="#1c2b44" />
                        <circle cx="15" cy="15.500" r="7" fill="#2c2f36" stroke="#8c9099" />
                        <text x="12" y="19.500" fontSize="11" fontFamily="Open Sans" fontWeight="600" fill="#fff">9</text>
                    </Svg>
                </button>
                <div className="w-px self-stretch bg-[#5b6378]" />
            </div>
        </div>
    );
}

export default function App() {
    return (
        <div className="relative flex h-screen flex-col overflow-hidden bg-[#e6e6e6] font-['Open_Sans','Noto_Sans',sans-serif] text-[11px] text-[#444]">
            <TitleBar />
            <TabBar />
            <Ribbon />
            <FormulaBar />
            <Sheet />
            <SheetTabs />
            <StatusBar />
            <Taskbar />
            <div className="pointer-events-none absolute right-[51px] bottom-[69px] w-[258px] whitespace-nowrap text-[#aaa]">
                <p className="text-[18px] leading-6">Activar Windows</p>
                <p className="text-[13px] leading-[18px]">Ve a Configuración para activar Windows.</p>
            </div>
        </div>
    );
}
